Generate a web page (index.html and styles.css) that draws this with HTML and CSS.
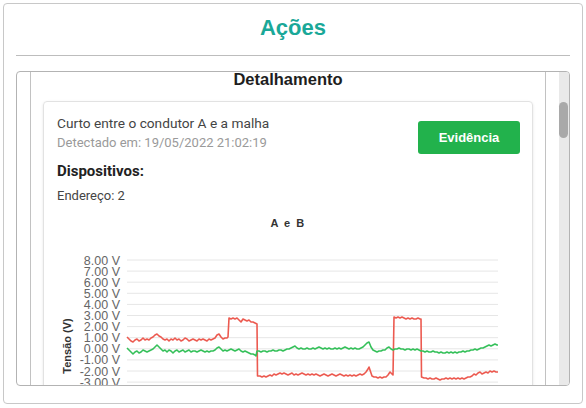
FILE: index.html
```html
<!DOCTYPE html>
<html lang="pt-BR">
  <head>
    <meta charset="UTF-8" />
    <title>Ações</title>
    <link rel="stylesheet" href="styles.css">
  </head>
  <body>
    <div class="acoes">
      <h1 class="acoes-title">Ações</h1>
      <hr class="acoes-rule" />
      <div class="panel">
        <div class="modal">
          <h2 class="modal-title">Detalhamento</h2>
          <div class="evento">
            <div class="evento-head">
              <div>
                <div class="evento-desc">Curto entre o condutor A e a malha</div>
                <div class="evento-data">Detectado em: 19/05/2022 21:02:19</div>
              </div>
              <button class="btn-evidencia">Evidência</button>
            </div>
            <h3 class="dispositivos">Dispositivos:</h3>
            <div class="endereco">Endereço: 2</div>

            <!-- chart drawn in page coordinates through the viewBox -->
            <svg class="grafico" width="486" height="190" viewBox="44 205 486 190">
              <text class="grafico-titulo" x="288" y="226">A e B</text>
              <g class="grade">
                <line x1="127" x2="498" y1="259" y2="259" />
                <line x1="127" x2="498" y1="270.1" y2="270.1" />
                <line x1="127" x2="498" y1="281.2" y2="281.2" />
                <line x1="127" x2="498" y1="292.3" y2="292.3" />
                <line x1="127" x2="498" y1="303.4" y2="303.4" />
                <line x1="127" x2="498" y1="314.5" y2="314.5" />
                <line x1="127" x2="498" y1="325.6" y2="325.6" />
                <line x1="127" x2="498" y1="336.7" y2="336.7" />
                <line x1="127" x2="498" y1="347.8" y2="347.8" />
                <line x1="127" x2="498" y1="358.9" y2="358.9" />
                <line x1="127" x2="498" y1="370" y2="370" />
                <line x1="127" x2="498" y1="381.1" y2="381.1" />
              </g>
              <g class="eixo">
                <text x="120" y="263.5">8.00 V</text>
                <text x="120" y="274.6">7.00 V</text>
                <text x="120" y="285.7">6.00 V</text>
                <text x="120" y="296.8">5.00 V</text>
                <text x="120" y="307.9">4.00 V</text>
                <text x="120" y="319">3.00 V</text>
                <text x="120" y="330.1">2.00 V</text>
                <text x="120" y="341.2">1.00 V</text>
                <text x="120" y="352.3">0.00 V</text>
                <text x="120" y="363.4">-1.00 V</text>
                <text x="120" y="374.5">-2.00 V</text>
                <text x="120" y="385.6">-3.00 V</text>
              </g>
              <text class="eixo-nome" transform="translate(71 345) rotate(-90)">Tensão (V)</text>
              <polyline class="serie-a" points="127,336 129,338 131,340 133,341 135,339 137,338 139,340 141,339 143,337 145,339 147,338 149,339 151,337 153,336 155,334 157,333 159,335 161,336 163,338 165,339 167,338 169,340 171,338 173,339 175,337 177,339 179,338 181,340 183,339 185,337 187,338 189,340 191,339 193,338 195,339 197,340 199,338 201,339 203,338 205,339 207,340 209,338 211,339 213,338 215,337 217,334 219,333 221,336 223,338 225,337 227,337 228,336 229,317 231,318 233,317 235,318 237,317 239,319 241,321 243,318 245,319 247,320 249,319 251,321 253,321 255,322 257,323 257.5,375 260,375 262,376 264,375 266,376 268,375 270,374 272,375 274,373 276,374 278,373 280,372 282,373 284,372 286,373 288,374 290,373 292,372 294,374 296,373 298,374 300,373 302,372 304,373 306,374 308,373 310,374 312,373 314,374 316,373 318,374 320,375 322,374 324,373 326,374 328,375 330,374 332,373 334,374 336,375 338,374 340,373 342,374 344,375 346,374 348,375 350,374 352,375 354,374 356,375 358,374 360,373 362,374 364,373 366,371 368,368 369,366 370,369 372,375 374,376 376,376 378,377 380,376 382,377 384,376 386,376 388,374 390,371 392,373 393,374 394,316 396,317 398,316 400,317 402,316 404,317 406,318 408,317 410,318 412,317 414,318 416,318 418,317 420,318 421,318 421.5,376 424,377 426,377 428,378 430,377 432,378 434,378 436,377 438,378 440,379 442,378 444,378 446,377 448,378 450,377 452,378 454,377 456,378 458,377 460,378 462,377 464,378 466,377 468,376 470,376 472,375 474,373 476,374 478,372 480,371 482,373 484,372 486,371 488,372 490,370 492,371 494,370 496,371 498,371" />
              <polyline class="serie-b" points="127,347 129,349 131,351 133,353 135,351 137,350 139,352 141,351 143,349 145,350 147,351 149,350 151,349 153,348 155,346 157,344 159,346 161,348 163,350 165,349 167,351 169,349 171,350 173,352 175,350 177,349 179,351 181,350 183,349 185,351 187,350 189,349 191,351 193,350 195,350 197,351 199,350 201,349 203,350 205,351 207,350 209,351 211,350 213,350 215,349 217,347 219,346 221,348 223,350 225,349 227,350 229,349 231,348 233,349 235,350 237,349 239,348 241,350 243,351 245,350 247,351 249,352 251,353 253,353 255,354 256,355 257,350 259,350 261,351 263,350 265,350 267,351 269,350 271,350 273,349 275,350 277,350 279,349 281,349 283,350 285,349 287,348 289,348 291,347 293,346 295,345 297,347 299,348 301,347 303,348 305,348 307,347 309,348 311,348 313,347 315,348 317,347 319,346 321,347 323,348 325,347 327,348 329,347 331,348 333,348 335,347 337,348 339,347 341,348 343,347 345,346 347,347 349,348 351,347 353,348 355,347 357,348 359,348 361,347 363,346 365,344 367,342 369,341 371,346 373,349 375,350 377,351 379,350 381,350 383,349 385,349 387,347 389,346 391,348 393,349 395,348 397,348 399,347 401,348 403,348 405,349 407,348 409,348 411,349 413,348 415,349 417,348 419,349 421,350 423,350 425,351 427,350 429,351 431,351 433,350 435,351 437,351 439,352 441,351 443,352 445,352 447,351 449,352 451,351 453,352 455,351 457,352 459,351 461,351 463,350 465,351 467,350 469,350 471,349 473,349 475,348 477,349 479,348 481,347 483,347 485,346 487,345 489,344 491,345 493,344 495,343 497,344 498,344" />
            </svg>
          </div>
        </div>
        <div class="scrollbar"><div class="scrollbar-thumb"></div></div>
      </div>
    </div>
  </body>
</html>
```

FILE: styles.css
```css
html,
body {
  margin: 0;
  background: #fff;
}

body {
  font: 13px "Liberation Sans", Arial, sans-serif;
  color: #222;
}

.acoes {
  box-sizing: border-box;
  margin: 3px;
  width: 580px;
  height: 401px;
  padding: 12px 12px 0;
  border: 1px solid #c8c8c8;
  border-radius: 4px;
}

.acoes-title {
  margin: 0;
  font-size: 22px;
  line-height: 24px;
  font-weight: bold;
  text-align: center;
  color: #1aa898;
}

.acoes-rule {
  margin: 15px 0 0;
  height: 0;
  border: 0;
  border-top: 1px solid #bdbdbd;
}

.panel {
  box-sizing: border-box;
  display: flex;
  margin-top: 15px;
  height: 315px;
  border: 1px solid #b3b3b3;
  border-radius: 4px;
  overflow: hidden;
}

.modal {
  flex: 1;
  margin: 0 13px;
  border-left: 1px solid #c2c2c2;
  border-right: 1px solid #c2c2c2;
  overflow: hidden;
}

.modal-title {
  margin: -2px 0 0;
  font-size: 16.5px;
  line-height: 18px;
  font-weight: bold;
  text-align: center;
  color: #1e1e1e;
}

.evento {
  margin: 13px 12px 0;
  padding: 11px 12px 0 13px;
  border: 1px solid #e2e2e2;
  border-radius: 4px;
  box-shadow: 0 1px 3px rgba(0, 0, 0, 0.1);
  font-family: Roboto, "Liberation Sans", sans-serif;
  color: #444;
}

.evento-head {
  display: flex;
  justify-content: space-between;
  align-items: flex-start;
}

.evento-desc,
.evento-data {
  font-size: 13px;
  line-height: 20px;
}

.evento-desc {
  font-size: 13.7px;
}

.evento-data {
  color: #9a9a9a;
}

.btn-evidencia {
  margin-top: 8px;
  width: 102px;
  height: 33px;
  padding: 0;
  border: 0;
  border-radius: 3px;
  background: #22b24c;
  color: #fff;
  font: bold 13px "Liberation Sans", Arial, sans-serif;
}

.dispositivos {
  margin: 7px 0 0;
  font-size: 15px;
  line-height: 20px;
  font-weight: bold;
  color: #222;
}

.endereco {
  margin-top: 5px;
  font-size: 13px;
  line-height: 20px;
}

.grafico {
  display: block;
  margin-left: -13px;
  font-family: "Liberation Sans", Arial, sans-serif;
}

.grafico-titulo {
  font-size: 11px;
  font-weight: bold;
  letter-spacing: 1.5px;
  text-anchor: middle;
  fill: #333;
}

.grade line {
  stroke: #e6e6e6;
  stroke-width: 1;
}

.eixo text {
  font-size: 12.5px;
  text-anchor: end;
  fill: #666;
}

.eixo-nome {
  font-size: 11px;
  font-weight: bold;
  text-anchor: middle;
  fill: #333;
}

.serie-a,
.serie-b {
  fill: none;
  stroke-width: 1.6;
  stroke-linejoin: round;
}

.serie-a {
  stroke: #ec5a50;
}

.serie-b {
  stroke: #35c05a;
}

.scrollbar {
  width: 10px;
  padding-top: 30px;
  background: #e9e9e9;
}

.scrollbar-thumb {
  width: 9px;
  height: 36px;
  border-radius: 5px;
  background: #a9a9a9;
}
```
